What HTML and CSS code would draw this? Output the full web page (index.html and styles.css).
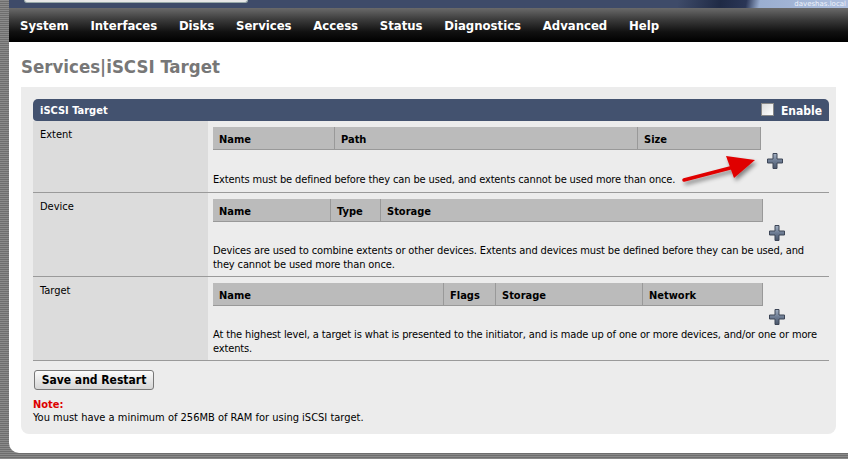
FILE: index.html
```html
<!DOCTYPE html>
<html>
<head>
<meta charset="utf-8">
<link rel="stylesheet" href="styles.css">
</head>
<body>
<div class="frame">
  <div class="topstrip">
    <div class="searchbox"></div>
    <div class="banner"><span class="host">daveshas.local</span></div>
  </div>
  <nav class="nav">
    <span>System</span><span>Interfaces</span><span>Disks</span><span>Services</span><span>Access</span><span>Status</span><span>Diagnostics</span><span>Advanced</span><span>Help</span>
  </nav>
  <h1 class="title">Services|iSCSI Target</h1>
  <div class="panel">
    <div class="tabhead">
      <span>iSCSI Target</span>
      <label class="enable"><span class="cbox"></span>Enable</label>
    </div>
    <div class="row r1">
      <div class="lbl">Extent</div>
      <div class="cell">
        <div class="grid">
          <div class="itable w547">
            <div class="th" style="width:122px">Name</div>
            <div class="th" style="width:303px">Path</div>
            <div class="th last">Size</div>
          </div>
          <div></div>
          <div></div>
          <div class="plus"><svg width="18" height="18" viewBox="0 0 18 18"><defs><linearGradient id="g1" x1="0" y1="0" x2="0" y2="1"><stop offset="0" stop-color="#a3b0c2"/><stop offset="0.5" stop-color="#6d7c93"/><stop offset="1" stop-color="#4a566a"/></linearGradient></defs><path d="M7 1.5h4v5.5h5.5v4H11v5.5H7V11H1.5V7H7z" fill="url(#g1)" stroke="#3d4657" stroke-width="1"/></svg></div>
        </div>
        <p class="desc">Extents must be defined before they can be used, and extents cannot be used more than once.</p>
      </div>
    </div>
    <div class="row r2">
      <div class="lbl">Device</div>
      <div class="cell">
        <div class="grid">
          <div class="itable w549">
            <div class="th" style="width:118px">Name</div>
            <div class="th" style="width:50px">Type</div>
            <div class="th last">Storage</div>
          </div>
          <div></div>
          <div></div>
          <div class="plus"><svg width="18" height="18" viewBox="0 0 18 18"><defs><linearGradient id="g2" x1="0" y1="0" x2="0" y2="1"><stop offset="0" stop-color="#a3b0c2"/><stop offset="0.5" stop-color="#6d7c93"/><stop offset="1" stop-color="#4a566a"/></linearGradient></defs><path d="M7 1.5h4v5.5h5.5v4H11v5.5H7V11H1.5V7H7z" fill="url(#g2)" stroke="#3d4657" stroke-width="1"/></svg></div>
        </div>
        <p class="desc">Devices are used to combine extents or other devices. Extents and devices must be defined before they can be used, and they cannot be used more than once.</p>
      </div>
    </div>
    <div class="row r3">
      <div class="lbl">Target</div>
      <div class="cell">
        <div class="grid">
          <div class="itable w549">
            <div class="th" style="width:231px">Name</div>
            <div class="th" style="width:52px">Flags</div>
            <div class="th" style="width:147px">Storage</div>
            <div class="th last">Network</div>
          </div>
          <div></div>
          <div></div>
          <div class="plus"><svg width="18" height="18" viewBox="0 0 18 18"><defs><linearGradient id="g3" x1="0" y1="0" x2="0" y2="1"><stop offset="0" stop-color="#a3b0c2"/><stop offset="0.5" stop-color="#6d7c93"/><stop offset="1" stop-color="#4a566a"/></linearGradient></defs><path d="M7 1.5h4v5.5h5.5v4H11v5.5H7V11H1.5V7H7z" fill="url(#g3)" stroke="#3d4657" stroke-width="1"/></svg></div>
        </div>
        <p class="desc">At the highest level, a target is what is presented to the initiator, and is made up of one or more devices, and/or one or more extents.</p>
      </div>
    </div>
    <button class="btn">Save and Restart</button>
    <div class="note"><span class="red">Note:</span><br>You must have a minimum of 256MB of RAM for using iSCSI target.</div>
  </div>
  <svg class="arrow" width="90" height="40" viewBox="0 0 90 40">
    <defs><filter id="sh" x="-20%" y="-50%" width="140%" height="200%"><feDropShadow dx="2" dy="3" stdDeviation="2" flood-color="#000" flood-opacity="0.45"/></filter></defs>
    <g filter="url(#sh)">
      <path d="M8 30 L58 17" stroke="#e00000" stroke-width="3.5" stroke-linecap="round"/>
      <path d="M50 6 L79 10 L58 28 Z" fill="#e00000"/>
    </g>
  </svg>
</div>
</body>
</html>
```

FILE: styles.css
```css
html, body {
  margin: 0;
  padding: 0;
}
body {
  width: 848px;
  height: 459px;
  overflow: hidden;
  background: repeating-linear-gradient(to bottom, #8a8a8a 0, #8a8a8a 1px, #6e6e6e 1px, #6e6e6e 2px);
  font-family: "DejaVu Sans Condensed", "DejaVu Sans", sans-serif;
  font-size: 11px;
  color: #000;
}
.frame {
  position: relative;
  margin-left: 9px;
  height: 453px;
  background: #fff;
  border-bottom-left-radius: 10px;
  overflow: hidden;
}
.topstrip {
  height: 8px;
  background: #3e4b69;
  display: flex;
  position: relative;
}
.searchbox {
  margin-left: 15px;
  width: 222px;
  height: 2px;
  background: #e8e8e8;
  border: 1px solid #9aa;
  border-top: none;
  border-radius: 0 0 4px 4px;
}
.banner {
  margin-left: auto;
  width: 170px;
  height: 8px;
  background: linear-gradient(100deg, #3e4b69 0%, #1f2a45 25%, #2a3656 40%, #9aaed0 48%, #aebfdf 100%);
  position: relative;
}
.host {
  position: absolute;
  right: 2px;
  top: 0;
  font-family: "DejaVu Sans", sans-serif;
  font-size: 7px;
  line-height: 8px;
  color: #eef2fa;
}
.nav {
  height: 34px;
  background: linear-gradient(to bottom, #6a6a6a 0%, #3a3a3a 35%, #111 70%, #000 100%);
  display: flex;
  align-items: center;
  padding-left: 11px;
}
.nav span {
  font-family: "DejaVu Sans Condensed", "DejaVu Sans", sans-serif;
  font-weight: bold;
  font-size: 13px;
  color: #fff;
  margin-right: 21.7px;
}
.title {
  margin: 14px 0 0 12px;
  height: 31px;
  font-family: "DejaVu Sans Condensed", "DejaVu Sans", sans-serif;
  font-size: 18.5px;
  font-weight: bold;
  color: #777;
}
.panel {
  margin-left: 12px;
  width: 796px;
  height: 323px;
  background: #ececec;
  border-radius: 0 0 8px 8px;
  padding: 12px 7px 12px 12px;
}
.tabhead {
  height: 22px;
  background: #43526f;
  border-radius: 5px 5px 0 4px;
  display: flex;
  align-items: center;
  padding-left: 7px;
  padding-right: 7px;
  color: #fff;
  font-weight: bold;
  font-size: 11px;
}
.enable {
  margin-left: auto;
  display: flex;
  align-items: center;
  font-size: 12px;
  padding-top: 2px;
}
.cbox {
  width: 11px;
  height: 11px;
  background: linear-gradient(135deg, #dcdcdc, #fff);
  border: 1px solid #888;
  margin-right: 7px;
  margin-top: -4px;
}
.row {
  display: flex;
  border-bottom: 1px solid #9a9a9a;
}
.r1 { height: 71px; }
.r2, .r3 { height: 83px; }
.lbl {
  width: 168px;
  background: #dcdcdc;
  padding: 7px 0 0 7px;
}
.cell {
  flex: 1;
  padding: 6px 0 0 5px;
}
.grid {
  display: grid;
  grid-template-columns: max-content 24px;
  justify-content: start;
}
.itable {
  height: 23px;
  background: #bbb;
  border-right: 1px solid #999;
  border-bottom: 1px solid #999;
  display: flex;
  box-sizing: border-box;
}
.w547 { width: 548px; }
.w549 { width: 550px; }
.th {
  font-weight: bold;
  font-size: 11px;
  padding: 6px 0 0 6px;
  border-right: 1px solid #999;
  box-sizing: border-box;
}
.th.last { border-right: none; flex: 1; }
.plus {
  padding: 2px 0 0 5px;
  height: 18px;
}
.desc {
  margin: 3px 0 0 0;
  line-height: 14px;
  width: 605px;
  letter-spacing: -0.13px;
}
.r2 .desc, .r3 .desc { margin-top: 2px; }
.btn {
  margin: 9px 0 0 1px;
  width: 120px;
  height: 20px;
  font-family: "DejaVu Sans Condensed", "DejaVu Sans", sans-serif;
  font-weight: bold;
  font-size: 12px;
  background: linear-gradient(to bottom, #fcfcfc, #e4e4e4 60%, #d6d6d6);
  border: 1px solid #777;
  border-radius: 3px;
  padding: 0;
  color: #000;
  display: block;
}
.note {
  margin-top: 8px;
  line-height: 13px;
}
.red { color: #d00; font-weight: bold; }
.arrow {
  position: absolute;
  left: 667px;
  top: 150px;
}
```
